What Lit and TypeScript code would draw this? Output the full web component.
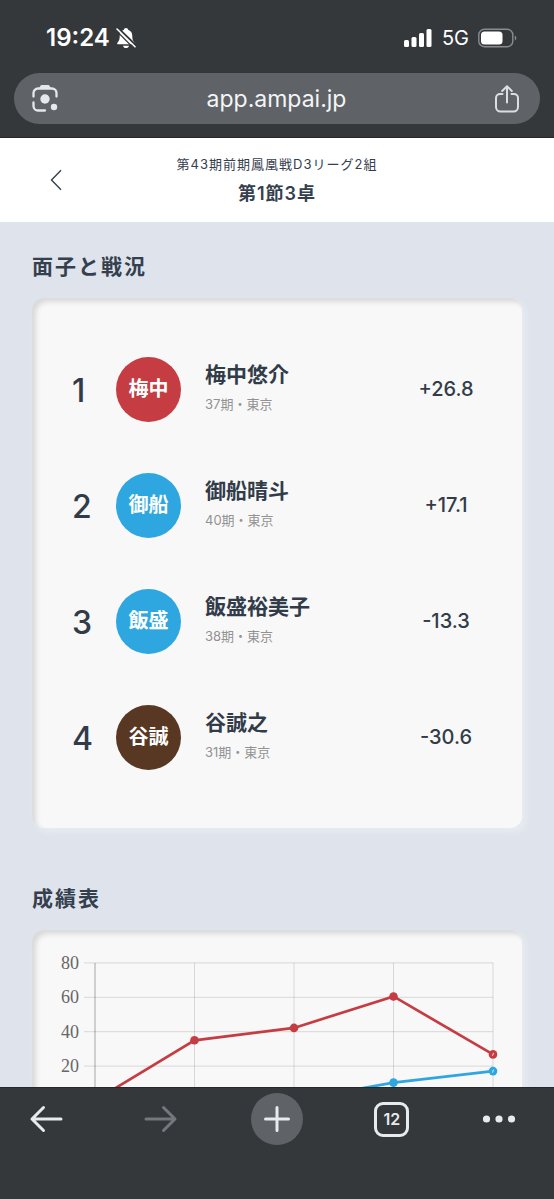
import { LitElement, html, svg, css } from "lit";
import { customElement, property } from "lit/decorators.js";
import { classMap } from "lit/directives/class-map.js";

interface Player {
  rank: number;
  short: string;
  name: string;
  term: string;
  score: string;
  tone: "red" | "blue" | "brown";
}

const PLAYERS: Player[] = [
  { rank: 1, short: "梅中", name: "梅中悠介", term: "37期・東京", score: "+26.8", tone: "red" },
  { rank: 2, short: "御船", name: "御船晴斗", term: "40期・東京", score: "+17.1", tone: "blue" },
  { rank: 3, short: "飯盛", name: "飯盛裕美子", term: "38期・東京", score: "-13.3", tone: "blue" },
  { rank: 4, short: "谷誠", name: "谷誠之", term: "31期・東京", score: "-30.6", tone: "brown" },
];

@customElement("status-bar")
class StatusBar extends LitElement {
  static styles = css`
    :host {
      display: flex;
      justify-content: space-between;
      align-items: center;
      padding: 23px 37px 0 46px;
      height: 30px;
      color: #fff;
      font-family: Inter, "Liberation Sans", sans-serif;
    }
    .side { display: flex; align-items: center; }
    .clock { font-size: 24px; line-height: 30px; font-weight: 600; margin-right: 6px; }
    .net { font-size: 20px; line-height: 30px; margin: 0 9px 0 9px; }
    svg { display: block; }
  `;
  render() {
    return html`
      <div class="side">
        <span class="clock">19:24</span>
        <svg width="20" height="22" viewBox="0 0 20 22" role="img" aria-label="消音">
          <path d="M10 1c1.200 0 2 .8 2.100 1.800 2.700.9 4.200 3.200 4.200 6.200 0 4 1 5.200 2.300 6.700.5.600.2 1.600-.7 1.600H2.100c-.9 0-1.200-1-.7-1.600C2.700 14.200 3.700 13 3.700 9c0-3 1.500-5.300 4.200-6.200C8 1.800 8.800 1 10 1z" fill="#fff" />
          <path d="M7 18.700h6c-.3 1.400-1.500 2.300-3 2.300s-2.700-.9-3-2.300z" fill="#fff" />
          <path d="M2 1L20 18.600" stroke="#34383b" stroke-width="2.200" />
          <path d="M1 2L19 19.800" stroke="#fff" stroke-width="1.600" stroke-linecap="round" />
          <path d="M0 3.500L17.500 21" stroke="#34383b" stroke-width="1.200" />
        </svg>
      </div>
      <div class="side">
        <svg width="29" height="20" viewBox="0 0 29 20" fill="#fff" role="img" aria-label="電波">
          <rect x="0" y="12" width="5" height="7" rx="1.500" />
          <rect x="7.500" y="9" width="5" height="10" rx="1.500" />
          <rect x="15" y="5" width="5" height="14" rx="1.500" />
          <rect x="22.500" y="1" width="5" height="18" rx="1.500" />
        </svg>
        <span class="net">5G</span>
        <svg width="39" height="20" viewBox="0 0 39 20" role="img" aria-label="電池">
          <rect x=".8" y="1.300" width="34" height="17.400" rx="5.500" fill="none" stroke="#898c8e" stroke-width="1.400" />
          <rect x="3" y="3.500" width="21.500" height="13" rx="3.500" fill="#fff" />
          <path d="M36.800 7.500c2 .8 2 4.200 0 5z" fill="#898c8e" />
        </svg>
      </div>
    `;
  }
}

@customElement("address-bar")
class AddressBar extends LitElement {
  static styles = css`
    :host { display: block; padding: 20px 14px 13px; border-bottom: 1px solid #25282a; }
    .pill {
      display: flex;
      align-items: center;
      justify-content: space-between;
      height: 51px;
      padding: 0 15px 0 14px;
      border-radius: 26px;
      background: #5f6367;
    }
    button {
      display: flex;
      align-items: center;
      justify-content: center;
      min-width: 36px;
      height: 44px;
      padding: 0;
      border: 0;
      background: none;
      color: #f4f5f6;
      font: 400 23px/30px Inter, "Liberation Sans", sans-serif;
    }
    .share { color: #dcdee1; }
    svg { display: block; }
  `;
  render() {
    return html`
      <div class="pill">
        <button aria-label="画像で検索">
          <svg width="30" height="30" viewBox="1 1 30 30" fill="none" stroke="#e4e7ee" stroke-width="2.300" stroke-linecap="round">
            <path d="M3.500 13.500V10a4.500 4.500 0 0 1 4.500-4.500h14A4.500 4.500 0 0 1 26.500 10v3.500" />
            <path d="M3.500 19.500V23A4.500 4.500 0 0 0 8 27.500h7" />
            <path d="M9 5.500l1.500-2.800c.3-.5.700-.7 1.200-.7h6.600c.5 0 .9.200 1.200.7L21 5.500z" fill="#e4e7ee" stroke="none" />
            <circle cx="15" cy="16" r="4.700" fill="#e4e7ee" stroke="none" />
            <circle cx="24" cy="24" r="3.200" fill="#e4e7ee" stroke="none" />
          </svg>
        </button>
        <button>app.ampai.jp</button>
        <button class="share" aria-label="共有">
          <svg width="26" height="30" viewBox="0 0 26 30" fill="none" stroke="currentColor" stroke-width="2" stroke-linecap="round" stroke-linejoin="round">
            <path d="M8.500 10H6a4 4 0 0 0-4 4v9a4.500 4.500 0 0 0 4.500 4.500h13A4.500 4.500 0 0 0 24 23v-9a4 4 0 0 0-4-4h-2.500" />
            <path d="M13 18.500V2.500M8.200 7L13 2.200 17.800 7" />
          </svg>
        </button>
      </div>
    `;
  }
}

@customElement("page-header")
class PageHeader extends LitElement {
  static styles = css`
    :host {
      display: grid;
      grid-template-columns: 40px 1fr 40px;
      align-items: center;
      height: 84px;
      padding: 0 36px;
      background: #fff;
      color: #35404e;
      text-align: center;
      font-family: Inter, "Noto Sans CJK JP", sans-serif;
    }
    .back { display: flex; justify-content: center; padding: 8px 0; color: #35404e; }
    .league { margin: 0; font-size: 13px; line-height: 24px; letter-spacing: 1px; }
    h1 { margin: 4px 0 0; font-size: 18px; line-height: 28px; font-weight: 600; letter-spacing: 1px; }
  `;
  render() {
    return html`
      <a class="back" href="#" aria-label="戻る">
        <svg width="14" height="22" viewBox="0 0 14 22" fill="none" stroke="currentColor" stroke-width="1.400">
          <path d="M12 1.300L2.500 11 12 20.700" />
        </svg>
      </a>
      <div>
        <p class="league">第43期前期鳳凰戦D3リーグ2組</p>
        <h1>第1節3卓</h1>
      </div>
    `;
  }
}

@customElement("player-row")
class PlayerRow extends LitElement {
  @property({ attribute: false }) player!: Player;
  static styles = css`
    :host {
      display: grid;
      grid-template-columns: 44px 65px 1fr 96px;
      align-items: center;
      height: 116px;
      padding: 0 28px 0 40px;
      color: #323c49;
      font-family: Inter, "Noto Sans CJK JP", sans-serif;
    }
    .rank { padding-top: 4px; font-size: 32px; line-height: 40px; font-weight: 500; }
    .avatar {
      display: grid;
      place-items: center;
      height: 65px;
      border-radius: 50%;
      color: #fff;
      font-size: 20px;
      line-height: 30px;
      font-weight: 600;
    }
    .red { background: #c53d43; }
    .blue { background: #2ea7e0; }
    .brown { background: #583822; }
    .who { padding: 0 0 2px 24px; }
    .name { margin: 0; font-size: 21px; line-height: 30px; font-weight: 600; }
    .term { margin: 2px 0 0; font-size: 13px; line-height: 24px; color: #929292; }
    .score { text-align: center; font-size: 20px; line-height: 30px; font-weight: 500; }
  `;
  render() {
    const p = this.player;
    return html`
      <span class="rank">${p.rank}</span>
      <span class=${classMap({ avatar: true, [p.tone]: true })}>${p.short}</span>
      <div class="who">
        <p class="name">${p.name}</p>
        <p class="term">${p.term}</p>
      </div>
      <span class="score">${p.score}</span>
    `;
  }
}

const TICKS = [80, 60, 40, 20];
const SERIES = [
  { tone: "blue", values: [0, -8, 0, 10.4, 17.1] },
  { tone: "red", values: [0, 35, 42.2, 60.5, 26.8] },
];
const xAt = (i: number) => 63 + i * 99.5;
const yAt = (v: number) => 170.5 - v * 1.72;

@customElement("score-chart")
class ScoreChart extends LitElement {
  static styles = css`
    :host { display: block; }
    svg { display: block; width: 100%; }
    .grid { stroke: #000; stroke-opacity: 0.13; stroke-width: 1; }
    .axis { stroke: #000; stroke-opacity: 0.22; stroke-width: 1.5; }
    .tick { font-family: "Liberation Serif", serif; font-size: 18px; fill: #666; text-anchor: end; }
    .line { fill: none; stroke-width: 2.7; }
    .line.red { stroke: #c53d43; }
    .line.blue { stroke: #2ea7e0; }
    .dot.red { fill: #c53d43; }
    .dot.blue { fill: #2ea7e0; }
    .glint { stroke: #fff; stroke-opacity: 0.8; stroke-width: 1; }
  `;
  render() {
    return html`
      <svg viewBox="0 0 490 240" role="img" aria-label="成績の推移">
        ${TICKS.map(
          (t) => svg`
            <text class="tick" x="47" y=${yAt(t) + 6}>${t}</text>
            <line class="grid" x1="52" x2="461" y1=${yAt(t)} y2=${yAt(t)} />`
        )}
        ${[0, 1, 2, 3, 4].map(
          (i) => svg`<line class=${i ? "grid" : "axis"} x1=${xAt(i)} x2=${xAt(i)} y1=${yAt(80)} y2="240" />`
        )}
        ${SERIES.map(
          (s) => svg`
            <polyline class="line ${s.tone}" points=${s.values.map((v, i) => `${xAt(i)},${yAt(v)}`).join(" ")} />
            ${s.values.map((v, i) => svg`<circle class="dot ${s.tone}" cx=${xAt(i)} cy=${yAt(v)} r="4.300" />`)}
            <line class="glint" x1="460.500" x2="461.500" y1=${yAt(s.values[4]) + 1.5} y2=${yAt(s.values[4]) - 1.5} />`
        )}
      </svg>
    `;
  }
}

@customElement("tool-bar")
class ToolBar extends LitElement {
  static styles = css`
    :host {
      display: flex;
      justify-content: space-between;
      align-items: flex-start;
      height: 106px;
      padding: 5px 37px 0 20px;
      border-top: 1px solid #25282a;
      background: #34383b;
      color: #e8eaed;
    }
    button {
      display: grid;
      place-items: center;
      width: 40px;
      height: 52px;
      padding: 0;
      border: 0;
      background: none;
      color: inherit;
    }
    .back { width: 52px; }
    .forward { color: #74777b; }
    .add { width: 52px; border-radius: 50%; background: #5f6367; }
    .count {
      display: grid;
      place-items: center;
      width: 29px;
      height: 29px;
      border: 3px solid #e8eaed;
      border-radius: 9px;
      font: 600 16px/20px Inter, "Liberation Sans", sans-serif;
    }
    .more { width: 36px; }
    svg { display: block; }
  `;
  render() {
    return html`
      <button class="back" aria-label="戻る">
        <svg width="34" height="28" viewBox="0 0 34 28" fill="none" stroke="currentColor" stroke-width="3" stroke-linecap="round" stroke-linejoin="round">
          <path d="M14.500 2.500L3 14l11.500 11.500M3 14h29" />
        </svg>
      </button>
      <button class="forward" aria-label="進む" disabled>
        <svg width="34" height="28" viewBox="0 0 34 28" fill="none" stroke="currentColor" stroke-width="3" stroke-linecap="round" stroke-linejoin="round">
          <path d="M19.500 2.500L31 14 19.500 25.500M31 14H2" />
        </svg>
      </button>
      <button class="add" aria-label="新しいタブ">
        <svg width="28" height="28" viewBox="0 0 28 28" stroke="currentColor" stroke-width="3" stroke-linecap="round">
          <path d="M14 2.500v23M2.500 14h23" />
        </svg>
      </button>
      <button aria-label="タブ一覧"><span class="count">12</span></button>
      <button class="more" aria-label="メニュー">
        <svg width="34" height="8" viewBox="0 0 34 8" fill="currentColor">
          <circle cx="4.500" cy="4" r="3.600" /><circle cx="17" cy="4" r="3.600" /><circle cx="29.500" cy="4" r="3.600" />
        </svg>
      </button>
    `;
  }
}

@customElement("app-root")
class AppRoot extends LitElement {
  static styles = css`
    :host { display: flex; flex-direction: column; height: 100vh; background: #34383b; }
    page-header { flex: none; }
    main {
      flex: 1;
      min-height: 0;
      padding: 28px 32px 0;
      overflow: hidden;
      background: #dfe4ec;
      font-family: "Noto Sans CJK JP", sans-serif;
    }
    h2 { margin: 0 0 18px; color: #35404e; font-size: 21px; line-height: 30px; font-weight: 600; letter-spacing: 2px; }
    section + section { margin-top: 54px; }
    .card {
      border-radius: 12px;
      background: #f8f8f8;
      box-shadow: inset 4px 4px 5px rgba(0, 0, 0, 0.12), 4px 4px 6px rgba(248, 248, 248, 0.4);
    }
    .players { padding: 33px 0; }
  `;
  render() {
    return html`
      <status-bar></status-bar>
      <address-bar></address-bar>
      <page-header></page-header>
      <main>
        <section>
          <h2>面子と戦況</h2>
          <div class="card players">
            ${PLAYERS.map((p) => html`<player-row .player=${p}></player-row>`)}
          </div>
        </section>
        <section>
          <h2>成績表</h2>
          <div class="card"><score-chart></score-chart></div>
        </section>
      </main>
      <tool-bar></tool-bar>
    `;
  }
}
